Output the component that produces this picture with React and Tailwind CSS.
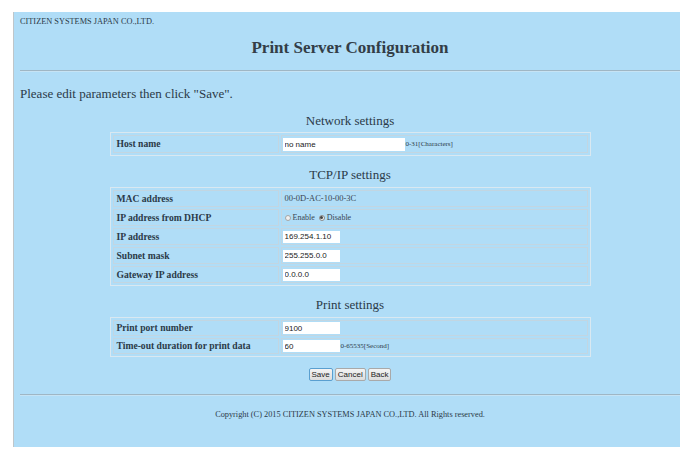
import React from 'react';

const serif = { fontFamily: '"Liberation Serif", "Times New Roman", serif' };

function Row({ label, children, h = 'h-[17px]' }) {
  return (
    <tr>
      <td className={`${h} w-[166px] border border-[#c2d6e2] px-[3px] py-0 text-[9.6px] font-bold text-[#2b3a48] leading-none`}>
        {label}
      </td>
      <td className={`${h} border border-[#c2d6e2] px-[1px] py-0 text-[8px] leading-none`}>{children}</td>
    </tr>
  );
}

function Field({ value, w = 'w-[57px]', h = 'h-[12px]' }) {
  return (
    <input
      readOnly
      value={value}
      className={`${w} ${h} bg-white px-[2px] text-[8px] text-[#222] align-middle outline-none border-0`}
      style={{ fontFamily: '"Liberation Sans", Arial, sans-serif' }}
    />
  );
}

function Table({ children }) {
  return (
    <table className="mx-auto w-[481px] border-separate border-spacing-[2px] border border-[#d9e8f1]">
      <tbody>{children}</tbody>
    </table>
  );
}

function Heading({ children, className = '' }) {
  return <div className={`text-center text-[13px] leading-[16px] text-[#2b3a48] ${className}`}>{children}</div>;
}

function Btn({ children, save }) {
  return (
    <button
      className={`h-[13px] px-[2px] text-[8px] leading-none text-[#222] rounded-[2px] border bg-gradient-to-b from-[#f4f4f4] to-[#dcdcdc] ${
        save ? 'border-[#5a9fd0]' : 'border-[#a9a9a9]'
      }`}
      style={{ fontFamily: '"Liberation Sans", Arial, sans-serif' }}
    >
      {children}
    </button>
  );
}

export default function App() {
  return (
    <div className="min-h-screen bg-white pt-[12px] pl-[13px]" style={serif}>
      <div className="w-[667px] h-[435px] bg-[#b0ddf7] border-l border-[#bfc6ca] pl-[6px] text-[#2b3a48]">
        <div className="h-[20px] leading-[20px] text-[8.3px]">CITIZEN SYSTEMS JAPAN CO.,LTD.</div>
        <div className="mt-[6px] h-[20px] leading-[20px] text-center text-[17px] font-bold text-[#333d47]">
          Print Server Configuration
        </div>
        <div className="mt-[12px] border-t border-b border-t-[#9fb6c4] border-b-[#c6e3f4]" />

        <div className="mt-[14px] text-[13px] leading-[16px]">Please edit parameters then click "Save".</div>

        <Heading className="mt-[11px]">Network settings</Heading>
        <div className="mt-[3px]">
          <Table>
            <Row label="Host name" h="h-[18px]">
              <Field value="no name" w="w-[122px]" h="h-[13px]" />
              <span className="ml-[1px] align-middle text-[7px]">0-31[Characters]</span>
            </Row>
          </Table>
        </div>

        <Heading className="mt-[11px]">TCP/IP settings</Heading>
        <div className="mt-[4px]">
          <Table>
            <Row label="MAC address">
              <span className="pl-[2px] text-[8.5px] text-[#3a4652]">00-0D-AC-10-00-3C</span>
            </Row>
            <Row label="IP address from DHCP">
              <span className="pl-[2px] inline-flex items-center gap-[2px] text-[8px] text-[#3a4652] align-middle">
                <span className="inline-block w-[6px] h-[6px] rounded-full border border-[#a5a5a5] bg-[#f0f0f0]" />
                Enable
                <span className="ml-[2px] inline-flex items-center justify-center w-[6px] h-[6px] rounded-full border border-[#8a8a8a] bg-[#f0f0f0]">
                  <span className="w-[3px] h-[3px] rounded-full bg-[#444]" />
                </span>
                Disable
              </span>
            </Row>
            <Row label="IP address">
              <Field value="169.254.1.10" />
            </Row>
            <Row label="Subnet mask">
              <Field value="255.255.0.0" />
            </Row>
            <Row label="Gateway IP address">
              <Field value="0.0.0.0" />
            </Row>
          </Table>
        </div>

        <Heading className="mt-[11px]">Print settings</Heading>
        <div className="mt-[4px]">
          <Table>
            <Row label="Print port number" h="h-[16px]">
              <Field value="9100" />
            </Row>
            <Row label="Time-out duration for print data" h="h-[16px]">
              <Field value="60" />
              <span className="ml-[1px] align-middle text-[7px]">0-65535[Second]</span>
            </Row>
          </Table>
        </div>

        <div className="mt-[11px] flex justify-center gap-[2px]">
          <Btn save>Save</Btn>
          <Btn>Cancel</Btn>
          <Btn>Back</Btn>
        </div>

        <div className="mt-[13px] border-t border-b border-t-[#9fb6c4] border-b-[#c6e3f4]" />

        <div className="mt-[13px] text-center text-[8.3px] leading-[12px]">
          Copyright (C) 2015 CITIZEN SYSTEMS JAPAN CO.,LTD. All Rights reserved.
        </div>
      </div>
    </div>
  );
}
